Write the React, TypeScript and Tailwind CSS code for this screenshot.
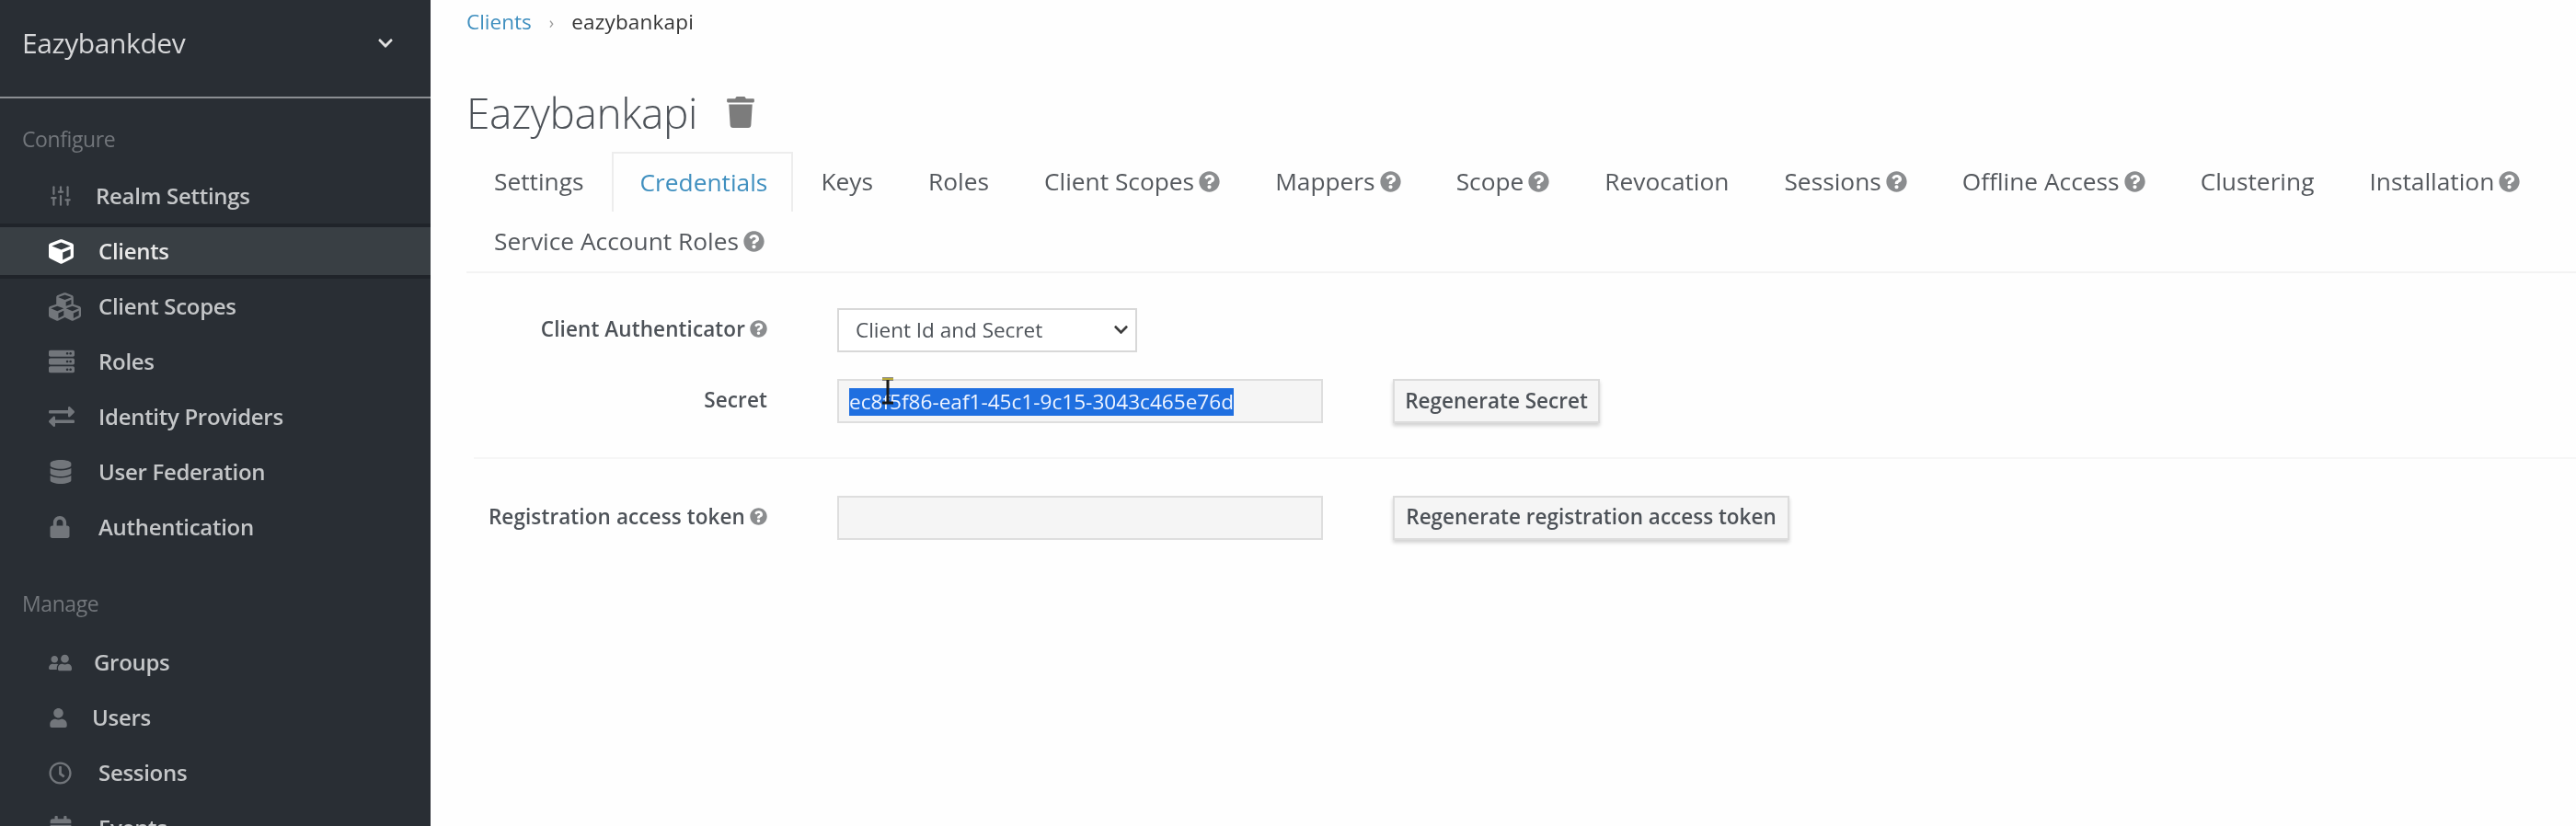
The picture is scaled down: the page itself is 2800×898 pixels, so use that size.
import { FaCube, FaCubes, FaServer, FaExchangeAlt, FaDatabase, FaLock, FaUserFriends, FaUser, FaRegClock, FaCalendarAlt, FaTrash, FaQuestionCircle, FaChevronDown } from 'react-icons/fa'
import { SlidersVertical } from 'lucide-react'

const configure = [
  { label: 'Realm Settings', icon: <SlidersVertical size={26} />, textX: 'w-[51px]' },
  { label: 'Clients', icon: <FaCube size={27} />, active: true },
  { label: 'Client Scopes', icon: <FaCubes size={35} /> },
  { label: 'Roles', icon: <FaServer size={28} /> },
  { label: 'Identity Providers', icon: <FaExchangeAlt size={28} /> },
  { label: 'User Federation', icon: <FaDatabase size={26} /> },
  { label: 'Authentication', icon: <FaLock size={24} /> },
]

const manage = [
  { label: 'Groups', icon: <FaUserFriends size={25} className="-scale-x-100" />, textX: 'w-[49px]' },
  { label: 'Users', icon: <FaUser size={21} />, textX: 'w-[47px]' },
  { label: 'Sessions', icon: <FaRegClock size={25} /> },
  { label: 'Events', icon: <FaCalendarAlt size={26} /> },
]

const tabs = [
  { label: 'Settings' },
  { label: 'Credentials', active: true },
  { label: 'Keys' },
  { label: 'Roles' },
  { label: 'Client Scopes', help: true },
  { label: 'Mappers', help: true },
  { label: 'Scope', help: true },
  { label: 'Revocation' },
  { label: 'Sessions', help: true },
  { label: 'Offline Access', help: true },
  { label: 'Clustering' },
  { label: 'Installation', help: true },
  { label: 'Service Account Roles', help: true },
]

function NavRow({ label, icon, active, textX }: { label: string; icon: React.ReactNode; active?: boolean; textX?: string }) {
  return (
    <div
      className={
        'flex h-[60px] items-center pl-[53px] text-[24px] font-semibold tracking-[-0.3px] ' +
        (active ? 'border-y-4 border-[#20242a] bg-[#393f44] text-[#e8e8e8]' : 'text-[#c4c6c8]')
      }
    >
      <span className={'flex shrink-0 items-center ' + (textX ?? 'w-[54px]') + (active ? ' text-white' : ' text-[#72767b]')}>{icon}</span>
      <span>{label}</span>
    </div>
  )
}

function Help({ size = 23 }: { size?: number }) {
  return <FaQuestionCircle size={size} className="ml-[5px] inline-block shrink-0 text-[#8b8d8f]" />
}

function FormLabel({ children, help }: { children: string; help?: boolean }) {
  return (
    <div className="flex w-[327px] items-center justify-end pb-[3px] text-[22.5px] font-semibold tracking-[0.1px] text-[#4d5258]">
      {children}
      {help && <Help size={19} />}
    </div>
  )
}

export default function App() {
  return (
    <div className="flex h-[898px] w-[2800px] overflow-hidden bg-[#fefefe] font-['Open_Sans',sans-serif] blur-[0.5px]">
      <aside className="h-full w-[468px] shrink-0 overflow-hidden bg-[#292e34]">
        <div className="flex h-[107px] items-center justify-between border-b-2 border-[#8b8e92] pb-[12px] pl-[24px] pr-[40px]">
          <span className="text-[30px] tracking-[-0.4px] text-[#d6d7d9]">Eazybankdev</span>
          <FaChevronDown size={18} className="text-[#e0e0e0]" />
        </div>
        <div className="flex h-[76px] items-center pl-[24px] pt-[12px] text-[23px] tracking-[-0.4px] text-[#72767b]">Configure</div>
        {configure.map((item) => (
          <NavRow key={item.label} label={item.label} icon={item.icon} active={item.active} textX={item.textX} />
        ))}
        <div className="flex h-[87px] items-end pb-[17px] pl-[24px] text-[23px] tracking-[-0.4px] text-[#72767b]">Manage</div>
        {manage.map((item) => (
          <NavRow key={item.label} label={item.label} icon={item.icon} textX={item.textX} />
        ))}
      </aside>

      <main className="min-w-0 flex-1 pl-[39px]">
        <div className="flex h-[50px] items-center pb-[2px] text-[22.5px]">
          <span className="text-[#3f8fbf]">Clients</span>
          <span className="mx-[19px] text-[18px] text-[#9c9c9c]">›</span>
          <span className="tracking-[0.2px] text-[#363636]">eazybankapi</span>
        </div>

        <div className="mt-[45px] flex h-[54px] items-center">
          <h1 className="text-[46px] font-light tracking-[-0.4px] text-[#4d5258]">Eazybankapi</h1>
          <FaTrash size={34} className="ml-[30px] text-[#7c7c7c]" />
        </div>

        <div className="mt-[16px] flex flex-wrap border-b-2 border-[#f3f3f3] text-[26.3px] text-[#55595e]">
          {tabs.map((tab) => (
            <div
              key={tab.label}
              className={
                'flex h-[65px] items-center ' +
                (tab.active ? 'border-2 border-b-0 border-[#ededed] pl-[29px] pr-[26px] text-[#3f8fbf]' : 'px-[30px]')
              }
            >
              {tab.label}
              {tab.help && <Help />}
            </div>
          ))}
        </div>

        <div className="mt-[38px] flex h-[48px] items-center">
          <FormLabel help>Client Authenticator</FormLabel>
          <div className="relative ml-[76px] h-[48px] w-[326px]">
            <select className="h-full w-full appearance-none border-2 border-[#d8d8d8] bg-white pl-[18px] text-[22.5px] text-[#4d5258]">
              <option>Client Id and Secret</option>
            </select>
            <FaChevronDown size={17} className="absolute right-[9px] top-[15px] text-[#3c3c3c]" />
          </div>
        </div>

        <div className="mt-[29px] flex h-[48px] items-center">
          <FormLabel>Secret</FormLabel>
          <div className="relative ml-[76px] flex h-[48px] w-[528px] items-center border-2 border-[#dedede] bg-[#f5f5f5] pl-[11px] pt-[2px] text-[22.6px]">
            <span className="bg-[#1f6fe0] leading-[30px] text-[#eef4ff]">ec8f5f86-eaf1-45c1-9c15-3043c465e76d</span>
            <svg width="18" height="30" viewBox="0 0 18 30" className="absolute left-[44px] top-[-4px]">
              <path d="M3 2h12M3 28h12M9 2v26" stroke="#1a1a1a" strokeWidth="3" fill="none" />
              <path d="M3 2h12" stroke="#b8a93a" strokeWidth="2" fill="none" />
            </svg>
          </div>
          <button className="ml-[76px] h-[48px] w-[225px] border-2 border-[#dcdcdc] bg-[#f5f5f5] text-[22.5px] font-semibold text-[#4d5258] shadow-[0_3px_4px_rgba(0,0,0,0.18)]">
            Regenerate Secret
          </button>
        </div>

        <div className="ml-[8px] mt-[37px] h-[2px] bg-[#f6f6f6]" />

        <div className="mt-[40px] flex h-[48px] items-center">
          <FormLabel help>Registration access token</FormLabel>
          <div className="ml-[76px] h-[48px] w-[528px] border-2 border-[#dedede] bg-[#f5f5f5]" />
          <button className="ml-[76px] h-[48px] w-[431px] border-2 border-[#dcdcdc] bg-[#f5f5f5] pb-[2px] text-[22.5px] font-semibold text-[#4d5258] shadow-[0_3px_4px_rgba(0,0,0,0.18)]">
            Regenerate registration access token
          </button>
        </div>
      </main>
    </div>
  )
}
